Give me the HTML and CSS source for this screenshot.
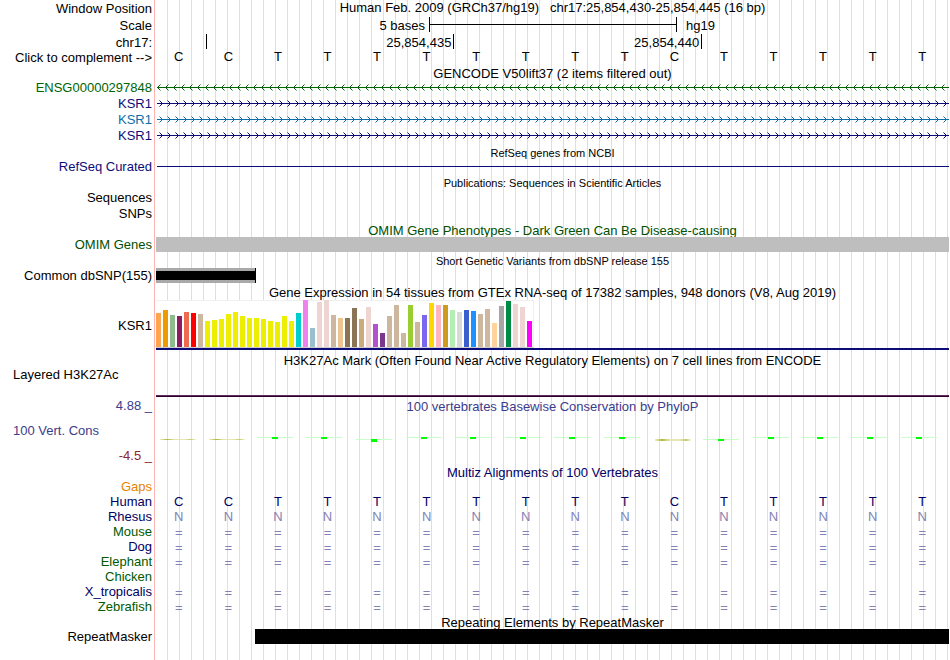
FILE: index.html
```
<!DOCTYPE html>
<html lang="en">
<head>
    <title>chr17:25,854,430-25,854,445 Genome Browser</title>
    <meta charset="UTF-8">
    <meta name="viewport" content="width=device-width, initial-scale=1.0">
    <link rel="stylesheet" href="styles.css">
</head>
<body>
    <main class="browser">
        <!-- Position and ruler -->
        <div class="row header">
            <div class="label">Window Position</div>
            <div class="position">Human Feb. 2009 (GRCh37/hg19)&nbsp;&nbsp; chr17:25,854,430-25,854,445 (16 bp)</div>
        </div>
        <div class="row ruler">
            <div class="label">Scale</div>
            <div class="scale">
                <span class="scale-size">5 bases</span>
                <span class="scale-bar"></span>
                <span class="scale-db">hg19</span>
            </div>
        </div>
        <div class="row ruler">
            <div class="label">chr17:</div>
            <div class="coords">
                <span></span>
                <span>25,854,435</span>
                <span>25,854,440</span>
            </div>
        </div>
        <div class="row dense">
            <button class="label" type="button">Click to complement --&gt;</button>
            <div class="bases ruler-bases" data-seq="CCTTTTTTTTCTTTTT"></div>
        </div>

        <!-- GENCODE -->
        <h2 class="title short">GENCODE V50lift37 (2 items filtered out)</h2>
        <div class="row green">
            <div class="label">ENSG00000297848</div>
            <svg class="gene" data-strand="-"></svg>
        </div>
        <div class="row navy">
            <div class="label">KSR1</div>
            <svg class="gene" data-strand="+"></svg>
        </div>
        <div class="row blue">
            <div class="label">KSR1</div>
            <svg class="gene" data-strand="+"></svg>
        </div>
        <div class="row navy">
            <div class="label">KSR1</div>
            <svg class="gene" data-strand="+"></svg>
        </div>

        <h2 class="title small shorter">RefSeq genes from NCBI</h2>
        <div class="row navy refseq">
            <div class="label">RefSeq Curated</div>
            <div class="intron"></div>
        </div>

        <h2 class="title small">Publications: Sequences in Scientific Articles</h2>
        <div class="row"><div class="label">Sequences</div></div>
        <div class="row"><div class="label">SNPs</div></div>

        <h2 class="title short omim">OMIM Gene Phenotypes - Dark Green Can Be Disease-causing</h2>
        <div class="row dense omim">
            <div class="label">OMIM Genes</div>
            <div class="omim-item"></div>
        </div>

        <h2 class="title small">Short Genetic Variants from dbSNP release 155</h2>
        <div class="row dense">
            <div class="label">Common dbSNP(155)</div>
            <div class="snp"></div>
        </div>

        <!-- GTEx -->
        <h2 class="title tall">Gene Expression in 54 tissues from GTEx RNA-seq of 17382 samples, 948 donors (V8, Aug 2019)</h2>
        <div class="row gtex">
            <div class="label">KSR1</div>
            <div class="gtex-track">
                <div class="gtex-bars" id="gtexBars"></div>
            </div>
        </div>

        <h2 class="title">H3K27Ac Mark (Often Found Near Active Regulatory Elements) on 7 cell lines from ENCODE</h2>
        <div class="row h3k27ac">
            <div class="label label-left">Layered H3K27Ac</div>
            <div class="h3k27ac-signal"></div>
        </div>

        <!-- Conservation -->
        <div class="row phylop-top">
            <div class="label">4.88 _</div>
            <h2>100 vertebrates Basewise Conservation by PhyloP</h2>
        </div>
        <div class="row phylop">
            <div class="phylop-labels">
                <div class="label label-left">100 Vert. Cons</div>
                <div class="label phylop-min">-4.5 _</div>
            </div>
            <div class="wiggle" id="wiggle"></div>
        </div>

        <h2 class="title short multiz">Multiz Alignments of 100 Vertebrates</h2>
        <div class="row dense gaps"><div class="label">Gaps</div></div>
        <div class="row dense multiz">
            <div class="label">Human</div>
            <div class="bases" data-seq="CCTTTTTTTTCTTTTT"></div>
        </div>
        <div class="row dense multiz">
            <div class="label">Rhesus</div>
            <div class="bases diff" data-seq="NNNNNNNNNNNNNNNN"></div>
        </div>
        <div class="row dense species">
            <div class="label">Mouse</div>
            <div class="bases diff unaligned" data-seq="================"></div>
        </div>
        <div class="row dense multiz">
            <div class="label">Dog</div>
            <div class="bases diff unaligned" data-seq="================"></div>
        </div>
        <div class="row dense species">
            <div class="label">Elephant</div>
            <div class="bases diff unaligned" data-seq="================"></div>
        </div>
        <div class="row dense species">
            <div class="label">Chicken</div>
        </div>
        <div class="row dense multiz">
            <div class="label">X_tropicalis</div>
            <div class="bases diff unaligned" data-seq="================"></div>
        </div>
        <div class="row dense species">
            <div class="label">Zebrafish</div>
            <div class="bases diff unaligned" data-seq="================"></div>
        </div>

        <h2 class="title short">Repeating Elements by RepeatMasker</h2>
        <div class="row dense">
            <div class="label">RepeatMasker</div>
            <div class="repeat"></div>
        </div>
    </main>

    <script src="script.js"></script>
</body>
</html>
```
FILE: styles.css
```
/* Genome browser tracks */
:root {
    --label-width: 156px;
    --grid: #dcdcf8;
    --edge: #ffb4b4;
    --navy: #0c0c78;
}

* { margin: 0; padding: 0; box-sizing: border-box; }

body {
    font-family: "Liberation Sans", Arial, Helvetica, sans-serif;
    font-size: 13px;
    line-height: 16px;
    background: #fff;
    color: #000;
}

/* guide lines every 12px, hidden under the label column */
.browser {
    min-height: 100vh;
    margin-right: 1px;
    background:
        linear-gradient(to right, #fff 154px, var(--edge) 154px, var(--edge) 155px, #fff 155px, #fff 156px, transparent 156px),
        repeating-linear-gradient(to right, transparent 0, transparent 11px, var(--grid) 11px, var(--grid) 12px);
}

.row {
    display: grid;
    grid-template-columns: var(--label-width) minmax(0, 1fr);
    height: 16px;
}

.row.header { line-height: 18px; }
.row.ruler { height: 17px; line-height: 20px; }
.row.dense { height: 15px; line-height: 15px; }
.row.refseq { line-height: 18px; }

.label {
    padding-right: 4px;
    text-align: right;
    white-space: nowrap;
}

.label-left {
    padding-left: 13px;
    text-align: left;
}

button.label {
    font: inherit;
    color: inherit;
    background: none;
    border: none;
    cursor: pointer;
}

h2 {
    font-size: 13px;
    font-weight: normal;
    text-align: center;
    white-space: nowrap;
}

.title {
    height: 16px;
    margin-left: var(--label-width);
    line-height: 18px;
}

.title.tall { height: 17px; line-height: 20px; }
.title.short { height: 15px; }
.title.shorter { height: 14px; }
.title.small { font-size: 11px; }

/* Track colors */
.green { color: #006400; }
.navy { color: var(--navy); }
.blue { color: #0c6ea8; }
.omim { color: #005000; }
.multiz { color: #000064; }
.species { color: #005a00; }
.gaps { color: #e68200; }

/* Ruler */
.position {
    text-align: center;
    line-height: 16px;
    white-space: nowrap;
}

.scale {
    display: grid;
    grid-template-columns: 273fr 248fr 272fr;
}

.scale-size {
    padding-right: 4px;
    text-align: right;
}

.scale-bar {
    height: 15px;
    margin-top: 1px;
    border: solid #000;
    border-width: 0 1px;
    background: linear-gradient(#000, #000) 0 7px / 100% 1px no-repeat;
}

.scale-db { padding-left: 9px; }

.coords {
    display: grid;
    grid-template-columns: 1fr 5fr 5fr 5fr;
    margin: 0 -1px 0 1px;
}

.coords span {
    height: 15px;
    margin-top: 1px;
    padding-right: 2px;
    border-right: 1px solid #000;
    text-align: right;
    line-height: 18px;
}

/* Bases */
.bases {
    display: grid;
    grid-template-columns: repeat(16, 1fr);
    margin: 0 2px 0 -2px;
    text-align: center;
}

.ruler-bases { line-height: 13px; }
.diff { color: #8282b4; }
.unaligned { line-height: 18px; }

/* Genes */
.gene {
    display: block;
    width: 100%;
    height: 16px;
}

.intron {
    height: 1px;
    margin: 8px 0 0 1px;
    background: var(--navy);
}

.omim-item { background: #bebebe; }

.snp {
    width: calc(12.5% + 1px);
    border-right: 1px solid #000;
    background: linear-gradient(#a9a9a9 3px, #000 3px, #000 12px, #a9a9a9 12px);
}

.repeat {
    margin-left: 12.5%;
    background: #000;
}

/* GTEx bar chart */
.row.gtex { height: 52px; line-height: 18px; }
.gtex .label { align-self: center; }

.gtex-track {
    height: 50px;
    border-bottom: 2px solid var(--navy);
}

.gtex-bars {
    display: flex;
    align-items: flex-end;
    gap: 2px;
    width: 378px;
    height: 48px;
    background: #fff;
    border-right: 1px solid #f0f0f0;
    border-bottom: 1px solid #ccc;
    box-shadow: inset 0 1px #f0f0f0;
}

.gtex-bars span { width: 5px; }

/* H3K27Ac */
.row.h3k27ac { height: 30px; line-height: 14px; }

.h3k27ac-signal {
    height: 29px;
    border-bottom: 1px solid #280028;
    box-shadow: inset 0 -1px #64285f;
}

/* PhyloP */
.phylop-top { color: #3c3c8c; }
.phylop-top h2 { line-height: 18px; }
.row.phylop { height: 50px; color: #3c3c8c; }

.phylop-labels {
    display: flex;
    flex-direction: column;
    justify-content: space-between;
    padding-top: 9px;
}

.phylop-min { color: #8c2828; }

.wiggle {
    display: grid;
    grid-template-columns: repeat(16, 1fr);
    justify-items: center;
    margin: 0 5px 0 -5px;
}

.wiggle span {
    width: 36px;
    height: 2px;
    margin-top: 23px;
    background:
        linear-gradient(#00ff00, #00ff00) center / 6px 2px no-repeat,
        linear-gradient(#c8ffc8, #c8ffc8) top / 100% 1px no-repeat;
}

.wiggle .low { margin-top: 25px; }

.wiggle .deep {
    height: 3px;
    margin-top: 25px;
    background:
        linear-gradient(#00ff00, #00ff00) center / 6px 3px no-repeat,
        linear-gradient(#c8ffc8, #c8ffc8) top / 100% 1px no-repeat;
}

.wiggle .neutral {
    height: 1px;
    margin: 25px 0 0 4px;
    background: linear-gradient(to right, #eeeec8, #b4b43c 20%, #e6e6b4 40%, #e6e6b4 70%, #c8c864 85%, #f5f5dc);
}

.wiggle .neutral.thick { height: 2px; }
```
FILE: script.js
```
// height and color of each tissue, in track order
const tissues = [
    [34, '#ffa54f'], [37, '#ee9a00'], [32, '#8fbc8f'], [31, '#8b1c62'], [35, '#ee6a50'], [34, '#ff0000'],
    [33, '#cdb79e'], [26, '#eeee00'], [27, '#eeee00'], [28, '#eeee00'], [33, '#eeee00'], [35, '#eeee00'],
    [31, '#eeee00'], [29, '#eeee00'], [29, '#eeee00'], [28, '#eeee00'], [26, '#eeee00'], [25, '#eeee00'],
    [31, '#eeee00'], [26, '#eeee00'], [34, '#00cdcd'], [47, '#ee82ee'], [19, '#9ac0cd'], [45, '#eed5d2'],
    [47, '#eed5d2'], [32, '#cdb79e'], [29, '#eec591'], [29, '#8b7355'], [39, '#8b7355'], [28, '#cdaa7d'],
    [40, '#eed5d2'], [23, '#b452cd'], [14, '#7a378b'], [31, '#cdb79e'], [42, '#cdb79e'], [14, '#cdb79e'],
    [42, '#9acd32'], [25, '#cdb79e'], [32, '#7a67ee'], [44, '#ffd700'], [42, '#ffb6c1'], [42, '#cd9b1d'],
    [37, '#b4eeb4'], [35, '#d9d9d9'], [37, '#3a5fcd'], [36, '#1e90ff'], [33, '#cdb79e'], [38, '#cdb79e'],
    [24, '#ffd39b'], [41, '#a6a6a6'], [46, '#008b45'], [43, '#eed5d2'], [40, '#eed5d2'], [26, '#ff00ff']
];

// phyloP score class per base
const scores = ['neutral', 'neutral', '', '', 'deep', '', '', '', '', '', 'neutral thick', 'low', '', '', '', ''];

document.getElementById('gtexBars').innerHTML = tissues.map(([height, color]) =>
    `<span style="height: ${height}px; background: ${color}"></span>`
).join('');

document.getElementById('wiggle').innerHTML = scores.map(score => `<span class="${score}"></span>`).join('');

document.querySelectorAll('.bases').forEach(el => {
    el.innerHTML = [...el.dataset.seq].map(base => `<span>${base}</span>`).join('');
});

// Intron line with strand arrows every 8px
document.querySelectorAll('.gene').forEach((el, i) => {
    const arrow = el.dataset.strand === '-' ? 'M4.5 4.5L1.5 7.5L4.5 10.5' : 'M3.5 4.5L6.5 7.5L3.5 10.5';
    el.innerHTML = `
        <pattern id="strand${i}" width="8" height="16" patternUnits="userSpaceOnUse">
            <path d="${arrow}" fill="none" stroke="currentColor"/>
        </pattern>
        <rect width="100%" height="16" fill="url(#strand${i})"/>
        <rect x="1" y="7" width="100%" height="1" fill="currentColor"/>`;
});
```
